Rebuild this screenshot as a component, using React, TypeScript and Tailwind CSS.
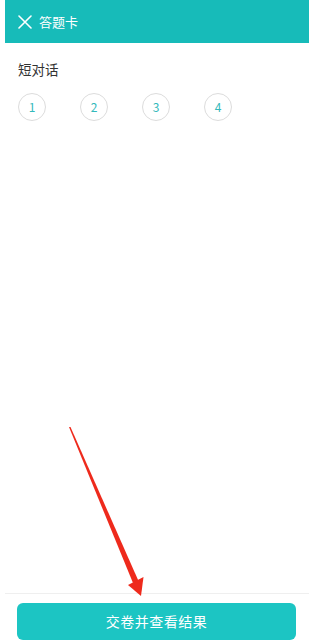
import React from "react";

export default function App() {
  const nums = ["1", "2", "3", "4"];
  return (
    <div
      className="relative w-[316px] h-[640px] bg-white overflow-hidden"
      style={{ fontFamily: '"Noto Sans CJK SC", "Noto Sans", sans-serif' }}
    >
      <div className="ml-[5px] w-[304px] h-[640px] flex flex-col">
        <div className="h-[43px] bg-[#17bbb9] flex items-center pl-[13px] gap-[7px]">
          <svg width="14" height="14" viewBox="0 0 14 14" fill="none">
            <path d="M1 1L13 13M13 1L1 13" stroke="white" strokeWidth="1.6" strokeLinecap="round" />
          </svg>
          <span className="text-white text-[13px] leading-none">答题卡</span>
        </div>
        <div className="pl-[13px] pt-[16px] text-[13.5px] text-[#333] leading-[20px]">短对话</div>
        <div className="pl-[13px] pt-[14px] flex gap-[34px]">
          {nums.map((n) => (
            <div
              key={n}
              className="w-[28px] h-[28px] rounded-full border border-[#dcdcdc] flex items-center justify-center text-[12px] text-[#33b9bb]"
            >
              {n}
            </div>
          ))}
        </div>
        <div className="flex-1" />
        <div className="h-px bg-[#efefef]" />
        <div className="pt-[9px] pl-[12px] pr-[13px]">
          <div className="h-[37px] rounded-[6px] bg-[#1cc5c3] flex items-center justify-center text-white text-[14px] tracking-[0.5px]">
            交卷并查看结果
          </div>
        </div>
      </div>
      <svg className="absolute left-0 top-0 pointer-events-none" width="316" height="640" viewBox="0 0 316 640">
        <polygon points="69,427 70.5,427 138.5,581 133,583" fill="#ee2a1c" />
        <polygon points="128,585 143.5,577 141,596" fill="#ee2a1c" />
      </svg>
    </div>
  );
}
